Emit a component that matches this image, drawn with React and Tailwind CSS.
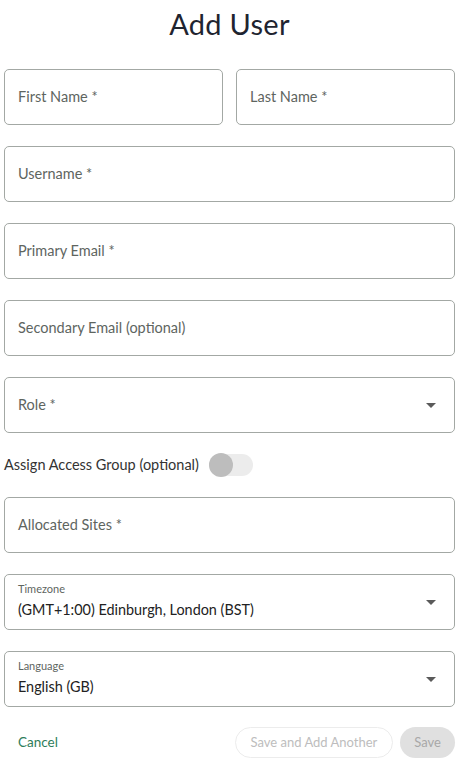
import { useState } from "react";

function Caret() {
  return (
    <svg width="10" height="5" viewBox="0 0 10 5" className="shrink-0">
      <path d="M0 0 L10 0 L5 5 Z" fill="#5a5a5a" />
    </svg>
  );
}

function Field({ label, className = "" }) {
  return (
    <div className={`h-[56px] rounded-[5px] border border-[#a3a8a4] flex items-center px-[13px] ${className}`}>
      <span className="text-[14.5px] text-[#5e655f]">{label}</span>
    </div>
  );
}

function SelectField({ label, value }) {
  if (!value) {
    return (
      <div className="h-[56px] rounded-[5px] border border-[#a3a8a4] flex items-center pl-[13px] pr-[18px]">
        <span className="flex-1 text-[14.5px] text-[#5e655f]">{label}</span>
        <Caret />
      </div>
    );
  }
  return (
    <div className="h-[56px] rounded-[5px] border border-[#a3a8a4] flex items-center pl-[13px] pr-[18px]">
      <div className="flex-1 flex flex-col -mt-[2px]">
        <span className="text-[11px] leading-[14px] text-[#5e655f]">{label}</span>
        <span className="text-[14.4px] leading-[20px] mt-[4px] text-[#222]">{value}</span>
      </div>
      <Caret />
    </div>
  );
}

export default function App() {
  const [assign, setAssign] = useState(false);

  return (
    <main className="w-[459px] min-h-[768px] bg-white px-[4px] font-['Lato',sans-serif]">
      <h1 className="text-center text-[29px] leading-[36px] pt-[6px] text-[#1f2430] tracking-[0.3px]">Add User</h1>

      <div className="mt-[27px] flex flex-col gap-[21px]">
        <div className="flex gap-[13px]">
          <Field label="First Name *" className="flex-1" />
          <Field label="Last Name *" className="flex-1" />
        </div>
        <Field label="Username *" />
        <Field label="Primary Email *" />
        <Field label="Secondary Email (optional)" />
        <SelectField label="Role *" />
      </div>

      <div className="flex items-center h-[24px] mt-[20px] mb-[20px]">
        <span className="text-[14.5px] text-[#333]">Assign Access Group (optional)</span>
        <button
          onClick={() => setAssign(!assign)}
          className="relative ml-[10px] w-[44px] h-[22px] rounded-full bg-[#ececec]"
        >
          <span className={`absolute top-[-1px] w-[24px] h-[24px] rounded-full bg-[#bdbdbd] ${assign ? "left-[20px]" : "left-0"}`} />
        </button>
      </div>

      <div className="flex flex-col gap-[21px]">
        <Field label="Allocated Sites *" />
        <SelectField label="Timezone" value="(GMT+1:00) Edinburgh, London (BST)" />
        <SelectField label="Language" value="English (GB)" />
      </div>

      <div className="mt-[20px] flex items-center justify-between">
        <button className="text-[13.5px] text-[#2e7d5a] pl-[14px]">Cancel</button>
        <div className="flex items-center gap-[7px]">
          <button className="h-[31px] px-[15px] rounded-full border border-[#ececec] text-[13px] text-[#bdbdbd]">
            Save and Add Another
          </button>
          <button className="h-[31px] px-[14px] rounded-full bg-[#e0e0e0] text-[13px] text-[#a8a8a8]">
            Save
          </button>
        </div>
      </div>
    </main>
  );
}
